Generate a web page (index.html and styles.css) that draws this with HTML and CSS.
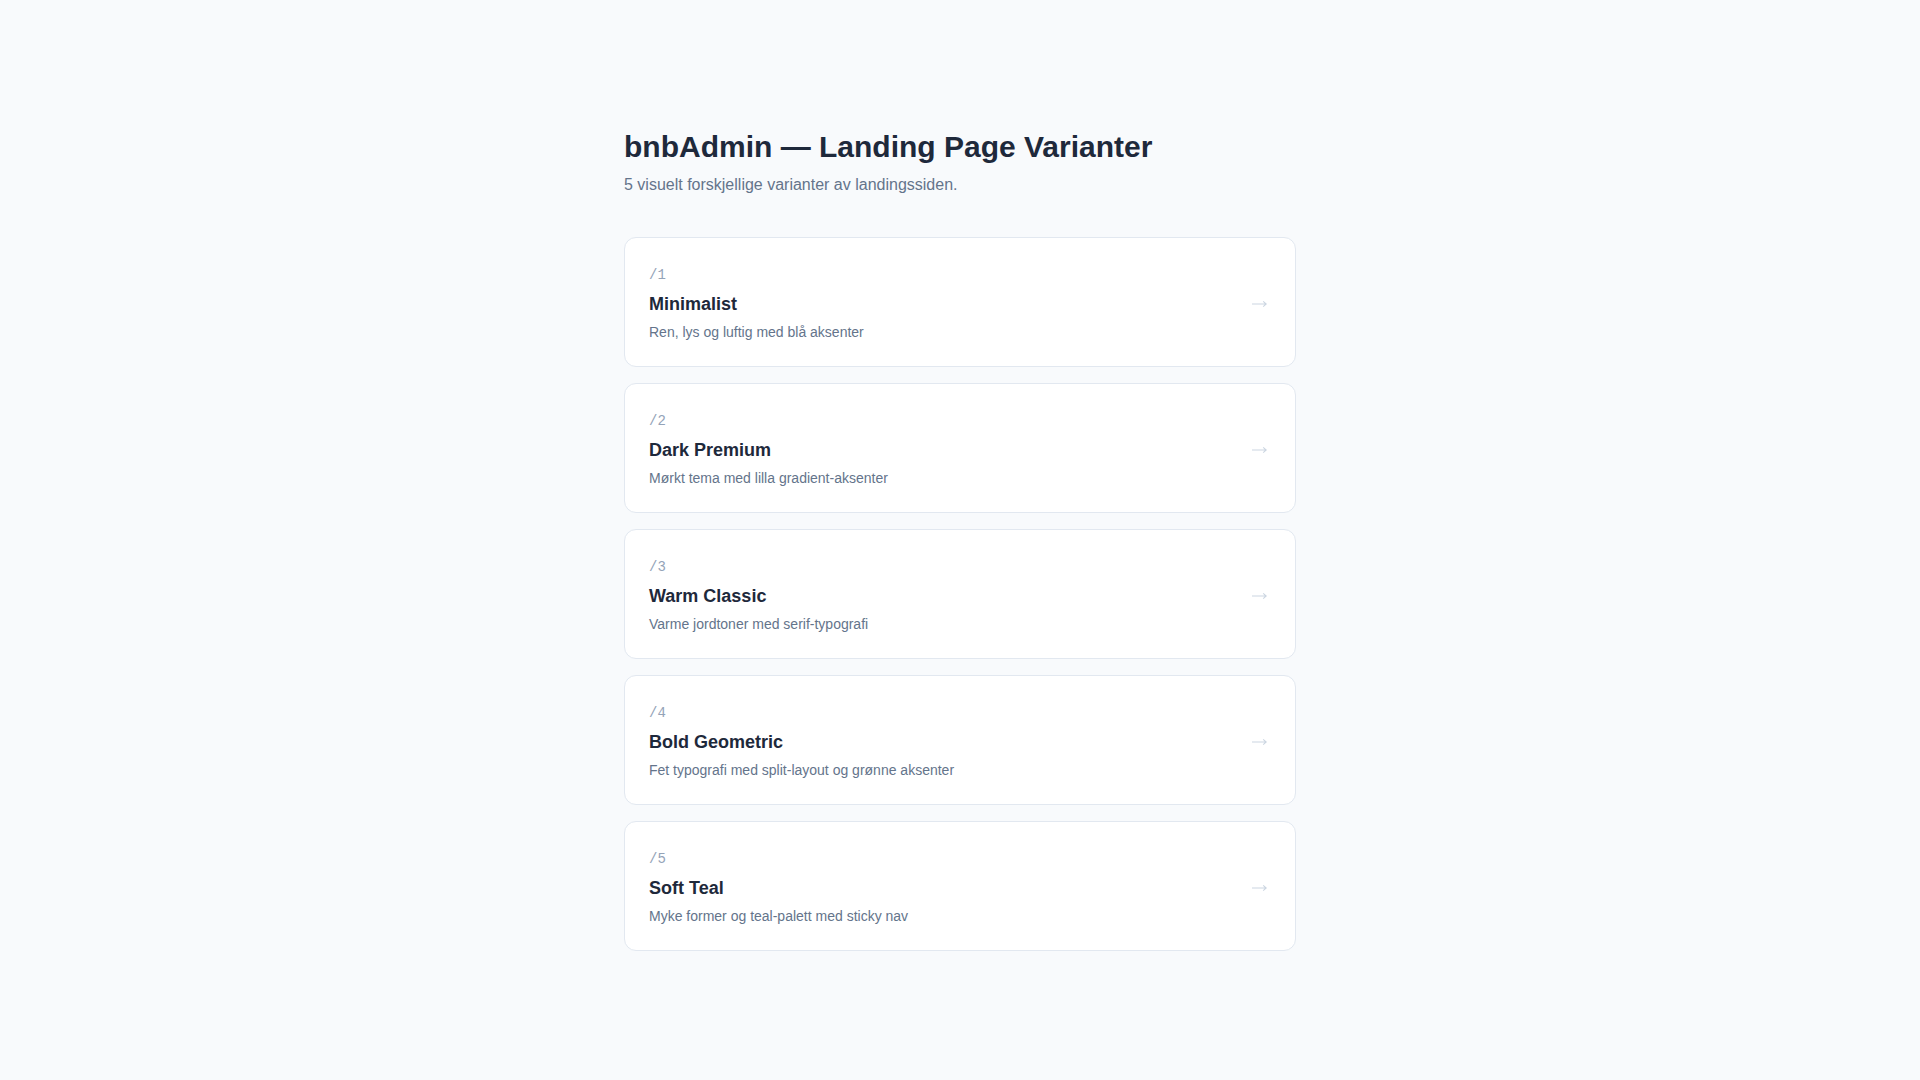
FILE: index.html
```html
<!DOCTYPE html>
<html lang="no">
<head>
<meta charset="utf-8">
<title>bnbAdmin — Landing Page Varianter</title>
<link rel="stylesheet" href="styles.css">
</head>
<body>
<main class="page">
  <h1 class="title">bnbAdmin — Landing Page Varianter</h1>
  <p class="subtitle">5 visuelt forskjellige varianter av landingssiden.</p>
  <ul class="list">
    <li><a class="card" href="#"><div class="card-body"><span class="label">/1</span><span class="name">Minimalist</span><span class="desc">Ren, lys og luftig med blå aksenter</span></div><svg class="arrow" width="15" height="8" viewBox="0 0 15 8" aria-hidden="true"><path d="M0 4H14.2M11.2 1.4L14.2 4L11.2 6.6"/></svg></a></li>
    <li><a class="card" href="#"><div class="card-body"><span class="label">/2</span><span class="name">Dark Premium</span><span class="desc">Mørkt tema med lilla gradient-aksenter</span></div><svg class="arrow" width="15" height="8" viewBox="0 0 15 8" aria-hidden="true"><path d="M0 4H14.2M11.2 1.4L14.2 4L11.2 6.6"/></svg></a></li>
    <li><a class="card" href="#"><div class="card-body"><span class="label">/3</span><span class="name">Warm Classic</span><span class="desc">Varme jordtoner med serif-typografi</span></div><svg class="arrow" width="15" height="8" viewBox="0 0 15 8" aria-hidden="true"><path d="M0 4H14.2M11.2 1.4L14.2 4L11.2 6.6"/></svg></a></li>
    <li><a class="card" href="#"><div class="card-body"><span class="label">/4</span><span class="name">Bold Geometric</span><span class="desc">Fet typografi med split-layout og grønne aksenter</span></div><svg class="arrow" width="15" height="8" viewBox="0 0 15 8" aria-hidden="true"><path d="M0 4H14.2M11.2 1.4L14.2 4L11.2 6.6"/></svg></a></li>
    <li><a class="card" href="#"><div class="card-body"><span class="label">/5</span><span class="name">Soft Teal</span><span class="desc">Myke former og teal-palett med sticky nav</span></div><svg class="arrow" width="15" height="8" viewBox="0 0 15 8" aria-hidden="true"><path d="M0 4H14.2M11.2 1.4L14.2 4L11.2 6.6"/></svg></a></li>
  </ul>
</main>
</body>
</html>
```
FILE: styles.css
```css
html, body {
  margin: 0;
  padding: 0;
  background: #f8fafc;
  font-family: "Liberation Sans", Arial, sans-serif;
  color: #1e293b;
}
.page {
  max-width: 672px;
  margin: 0 auto;
  padding: 129px 0 80px;
}
.title {
  margin: 0;
  font-size: 30px;
  line-height: 36px;
  font-weight: 700;
  color: #1e293b;
}
.subtitle {
  margin: 8px 0 40px;
  font-size: 16px;
  line-height: 24px;
  color: #64748b;
}
.list {
  list-style: none;
  margin: 0;
  padding: 0;
  display: flex;
  flex-direction: column;
  gap: 16px;
}
.card {
  display: flex;
  align-items: center;
  justify-content: space-between;
  background: #ffffff;
  border: 1px solid #e2e8f0;
  border-radius: 12px;
  padding: 27px 28px 24px 24px;
  text-decoration: none;
  color: inherit;
}
.card-body {
  display: flex;
  flex-direction: column;
}
.label {
  font-family: "Liberation Mono", "Courier New", monospace;
  font-size: 14px;
  line-height: 20px;
  color: #94a3b8;
}
.name {
  margin-top: 5px;
  font-size: 18px;
  line-height: 28px;
  font-weight: 700;
  color: #1e293b;
}
.desc {
  margin-top: 4px;
  font-size: 14px;
  line-height: 20px;
  color: #64748b;
}
.arrow {
  flex: none;
  margin-top: 1px;
  fill: none;
  stroke: #cbd5e1;
  stroke-width: 1.1;
}
```
